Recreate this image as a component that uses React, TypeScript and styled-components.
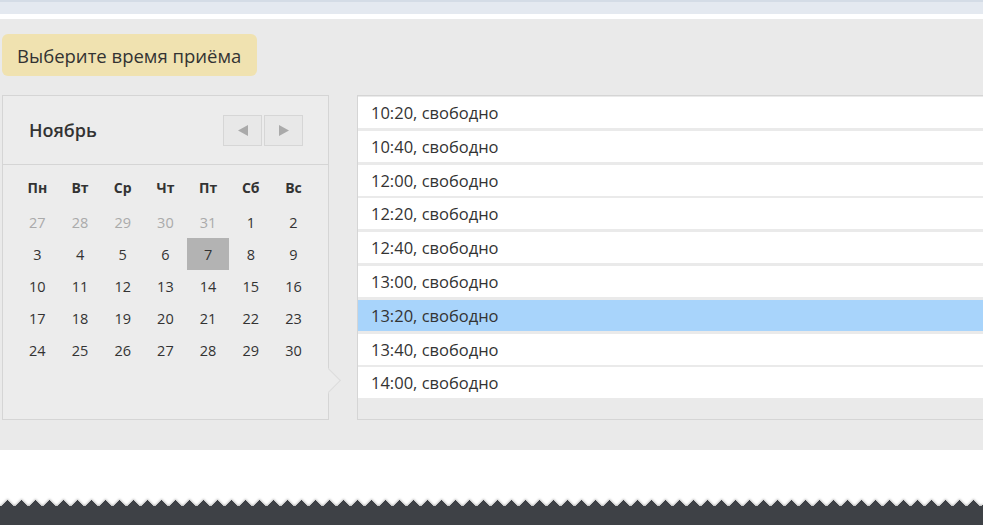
import styled, { createGlobalStyle } from "styled-components";

const GlobalStyle = createGlobalStyle`
  html, body {
    margin: 0;
    padding: 0;
    background: #ffffff;
    overflow-x: hidden;
  }
  body {
    font-family: "Open Sans", "Noto Sans", "DejaVu Sans", sans-serif;
    color: #333333;
  }
`;

const TopBar = styled.div`
  height: 12px;
  background: #e4e9f0;
  border-top: 2px solid #d4dce6;
`;

const Section = styled.section`
  margin-top: 5px;
  background: #eaeaea;
  padding: 15px 0 30px 2px;
`;

const Title = styled.div`
  display: inline-flex;
  align-items: center;
  height: 42px;
  padding: 0 16px 0 15px;
  border-radius: 6px;
  background: #f0e2b0;
  font-size: 18.5px;
  color: #333;
`;

const Content = styled.div`
  display: flex;
  align-items: stretch;
  gap: 28px;
  margin-top: 19px;
  margin-right: -20px;
`;

const Calendar = styled.div`
  position: relative;
  flex: 0 0 auto;
  width: 325px;
  height: 323px;
  border: 1px solid #d5d5d5;
  background: #ececec;
`;

const Pointer = styled.div`
  position: absolute;
  right: -13px;
  top: 272px;
  width: 13px;
  height: 26px;
  overflow: hidden;

  &::before {
    content: "";
    position: absolute;
    left: -10px;
    top: 3px;
    width: 18px;
    height: 18px;
    background: #ececec;
    border-top: 1px solid #dcdcdc;
    border-right: 1px solid #dcdcdc;
    transform: rotate(45deg);
  }
`;

const CalHeader = styled.div`
  display: flex;
  align-items: center;
  justify-content: space-between;
  height: 68px;
  padding: 0 25px 0 26px;
  border-bottom: 1px solid #d5d5d5;
`;

const Month = styled.div`
  font-size: 18px;
  font-weight: 600;
  color: #333;
`;

const NavGroup = styled.div`
  display: flex;
  gap: 2px;
`;

const NavButton = styled.button`
  display: flex;
  align-items: center;
  justify-content: center;
  width: 39px;
  height: 31px;
  padding: 0;
  border: 1px solid #d6d6d6;
  background: #e8e8e8;
  cursor: pointer;
`;

const Grid = styled.div<{ $head?: boolean }>`
  display: grid;
  grid-template-columns: repeat(7, 42.7px);
  grid-auto-rows: 32px;
  margin: ${(p) => (p.$head ? "6px 0 0 13px" : "3px 0 0 13px")};
`;

const DayName = styled.div`
  display: flex;
  align-items: center;
  justify-content: center;
  font-size: 14px;
  font-weight: 700;
  color: #333;
`;

const Day = styled.div<{ $muted?: boolean; $selected?: boolean }>`
  display: flex;
  align-items: center;
  justify-content: center;
  font-size: 14.5px;
  color: ${(p) => (p.$muted ? "#aaaaaa" : "#333333")};
  background: ${(p) => (p.$selected ? "#b3b3b3" : "transparent")};
`;

const TimeList = styled.div`
  flex: 1;
  box-sizing: border-box;
  height: 325px;
  border: 1px solid #d5d5d5;
  padding-top: 1px;
  display: flex;
  flex-direction: column;
  gap: 2.8px;
`;

const Slot = styled.div<{ $active?: boolean }>`
  display: flex;
  align-items: center;
  flex: 0 0 31px;
  padding-left: 13px;
  font-size: 16.5px;
  color: #333;
  background: ${(p) => (p.$active ? "#a8d4fb" : "#ffffff")};
`;

const Gap = styled.div`
  height: 50px;
`;

const Footer = styled.footer`
  height: 25px;
  background:
    conic-gradient(from 135deg at 50% 0, #3e4146 90deg, transparent 0deg) 0 0 / 14px 6px repeat-x,
    linear-gradient(#3e4146, #3e4146) 0 6px / 100% 100% no-repeat;
  filter: drop-shadow(0 -1px 1px rgba(0, 0, 0, 0.3));
`;

const weekDays = ["Пн", "Вт", "Ср", "Чт", "Пт", "Сб", "Вс"];

const days: { n: number; muted?: boolean }[] = [
  { n: 27, muted: true },
  { n: 28, muted: true },
  { n: 29, muted: true },
  { n: 30, muted: true },
  { n: 31, muted: true },
  ...Array.from({ length: 30 }, (_, i) => ({ n: i + 1 })),
];

const slots = ["10:20", "10:40", "12:00", "12:20", "12:40", "13:00", "13:20", "13:40", "14:00"];

const Arrow = ({ dir }: { dir: "left" | "right" }) => (
  <svg width="10" height="11" viewBox="0 0 10 11">
    {dir === "left" ? (
      <polygon points="10,0 10,11 0,5.5" fill="#aaaaaa" />
    ) : (
      <polygon points="0,0 0,11 10,5.5" fill="#aaaaaa" />
    )}
  </svg>
);

export default function App() {
  return (
    <>
      <GlobalStyle />
      <TopBar />
      <Section>
        <Title>Выберите время приёма</Title>
        <Content>
          <Calendar>
            <CalHeader>
              <Month>Ноябрь</Month>
              <NavGroup>
                <NavButton aria-label="prev">
                  <Arrow dir="left" />
                </NavButton>
                <NavButton aria-label="next">
                  <Arrow dir="right" />
                </NavButton>
              </NavGroup>
            </CalHeader>
            <Grid $head>
              {weekDays.map((d) => (
                <DayName key={d}>{d}</DayName>
              ))}
            </Grid>
            <Grid>
              {days.map((d, i) => (
                <Day key={i} $muted={d.muted} $selected={!d.muted && d.n === 7}>
                  {d.n}
                </Day>
              ))}
            </Grid>
            <Pointer />
          </Calendar>
          <TimeList>
            {slots.map((t) => (
              <Slot key={t} $active={t === "13:20"}>
                {t}, свободно
              </Slot>
            ))}
          </TimeList>
        </Content>
      </Section>
      <Gap />
      <Footer />
    </>
  );
}
